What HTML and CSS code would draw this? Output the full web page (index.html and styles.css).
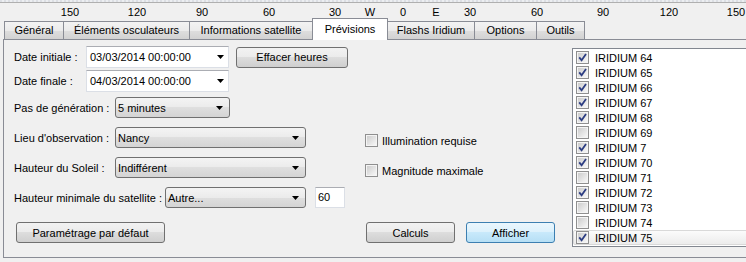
FILE: index.html
```html
<!DOCTYPE html>
<html lang="fr">
<head>
  <meta charset="UTF-8">
  <link rel="stylesheet" href="styles.css">
</head>
<body>
  <div class="map-edge"></div>

  <!-- longitude scale under the map -->
  <div class="scale">
    <span class="tick" style="left:70px">150</span>
    <span class="tick" style="left:137px">120</span>
    <span class="tick" style="left:202px">90</span>
    <span class="tick" style="left:269px">60</span>
    <span class="tick" style="left:335px">30</span>
    <span class="tick" style="left:370px">W</span>
    <span class="tick" style="left:403px">0</span>
    <span class="tick" style="left:436px">E</span>
    <span class="tick" style="left:470px">30</span>
    <span class="tick" style="left:537px">60</span>
    <span class="tick" style="left:603px">90</span>
    <span class="tick" style="left:669px">120</span>
    <span class="tick" style="left:736px">150</span>
  </div>

  <div class="tabs">
    <div class="tab t-general">Général</div>
    <div class="tab t-elements">Éléments osculateurs</div>
    <div class="tab t-infos">Informations satellite</div>
    <div class="tab t-previsions active">Prévisions</div>
    <div class="tab t-flashs">Flashs Iridium</div>
    <div class="tab t-options">Options</div>
    <div class="tab t-outils">Outils</div>
  </div>

  <div class="panel">
    <div class="form">
      <div class="row">
        <span class="label-date">Date initiale :</span>
        <div class="datebox">03/03/2014 00:00:00
          <svg class="arrow" width="7" height="4" viewBox="0 0 7 4"><path d="M0 0h7L3.5 4z"/></svg>
        </div>
        <button class="btn btn-clear">Effacer heures</button>
      </div>
      <div class="row row-second">
        <span class="label-date">Date finale :</span>
        <div class="datebox">04/03/2014 00:00:00
          <svg class="arrow" width="7" height="4" viewBox="0 0 7 4"><path d="M0 0h7L3.5 4z"/></svg>
        </div>
      </div>
      <div class="row combo-row combo-first">
        <span class="label">Pas de génération :</span>
        <div class="combo combo-short">5 minutes
          <svg class="arrow" width="7" height="4" viewBox="0 0 7 4"><path d="M0 0h7L3.5 4z"/></svg>
        </div>
      </div>
      <div class="row combo-row">
        <span class="label">Lieu d'observation :</span>
        <div class="combo">Nancy
          <svg class="arrow" width="7" height="4" viewBox="0 0 7 4"><path d="M0 0h7L3.5 4z"/></svg>
        </div>
      </div>
      <div class="row combo-row">
        <span class="label">Hauteur du Soleil :</span>
        <div class="combo">Indifférent
          <svg class="arrow" width="7" height="4" viewBox="0 0 7 4"><path d="M0 0h7L3.5 4z"/></svg>
        </div>
      </div>
      <div class="row combo-row">
        <span class="label-long">Hauteur minimale du satellite :</span>
        <div class="combo combo-mid">Autre...
          <svg class="arrow" width="7" height="4" viewBox="0 0 7 4"><path d="M0 0h7L3.5 4z"/></svg>
        </div>
        <div class="textbox">60</div>
      </div>
      <div class="actions">
        <button class="btn btn-default">Paramétrage par défaut</button>
      </div>
    </div>

    <div class="options">
      <label class="check"><span class="cb"></span>Illumination requise</label>
      <label class="check"><span class="cb"></span>Magnitude maximale</label>
      <div class="actions">
        <button class="btn btn-small">Calculs</button>
        <button class="btn btn-small btn-focus">Afficher</button>
      </div>
    </div>

    <div class="list">
      <div class="item"><span class="cb checked"><svg width="9" height="9" viewBox="0 0 9 9"><path d="M1.2 4.4L3.6 7.2L8 1"/></svg></span>IRIDIUM 64</div>
      <div class="item"><span class="cb checked"><svg width="9" height="9" viewBox="0 0 9 9"><path d="M1.2 4.4L3.6 7.2L8 1"/></svg></span>IRIDIUM 65</div>
      <div class="item"><span class="cb checked"><svg width="9" height="9" viewBox="0 0 9 9"><path d="M1.2 4.4L3.6 7.2L8 1"/></svg></span>IRIDIUM 66</div>
      <div class="item"><span class="cb checked"><svg width="9" height="9" viewBox="0 0 9 9"><path d="M1.2 4.4L3.6 7.2L8 1"/></svg></span>IRIDIUM 67</div>
      <div class="item"><span class="cb checked"><svg width="9" height="9" viewBox="0 0 9 9"><path d="M1.2 4.4L3.6 7.2L8 1"/></svg></span>IRIDIUM 68</div>
      <div class="item"><span class="cb"></span>IRIDIUM 69</div>
      <div class="item"><span class="cb checked"><svg width="9" height="9" viewBox="0 0 9 9"><path d="M1.2 4.4L3.6 7.2L8 1"/></svg></span>IRIDIUM 7</div>
      <div class="item"><span class="cb checked"><svg width="9" height="9" viewBox="0 0 9 9"><path d="M1.2 4.4L3.6 7.2L8 1"/></svg></span>IRIDIUM 70</div>
      <div class="item"><span class="cb"></span>IRIDIUM 71</div>
      <div class="item"><span class="cb checked"><svg width="9" height="9" viewBox="0 0 9 9"><path d="M1.2 4.4L3.6 7.2L8 1"/></svg></span>IRIDIUM 72</div>
      <div class="item"><span class="cb"></span>IRIDIUM 73</div>
      <div class="item"><span class="cb"></span>IRIDIUM 74</div>
      <div class="item current"><span class="cb checked"><svg width="9" height="9" viewBox="0 0 9 9"><path d="M1.2 4.4L3.6 7.2L8 1"/></svg></span>IRIDIUM 75</div>
    </div>
  </div>
</body>
</html>
```

FILE: styles.css
```css
* {
  box-sizing: border-box;
}
html, body {
  margin: 0;
  overflow: hidden;
}
body {
  width: 746px;
  height: 262px;
  background: #f0f0f0;
  font-family: "Liberation Sans", Arial, sans-serif;
  font-size: 11px;
  color: #000;
}
.map-edge {
  height: 3px;
  background: repeating-linear-gradient(90deg, #dcdfe4 0 2px, #eceef1 2px 4px);
  border-bottom: 1px solid #b0b0b0;
}
.scale {
  position: relative;
  height: 15px;
}
.tick {
  position: absolute;
  top: 3px;
  line-height: 13px;
  transform: translateX(-50%);
}

/* tabs */
.tabs {
  display: flex;
  align-items: flex-end;
  height: 21px;
  padding-left: 4px;
  position: relative;
  z-index: 1;
}
.tab {
  height: 18px;
  margin-left: -1px;
  border: 1px solid #898c95;
  border-bottom: none;
  background: linear-gradient(#f3f3f3, #ebebeb 50%, #dedede 50%, #d2d2d2);
  text-align: center;
  line-height: 17px;
}
.tab:first-child {
  margin-left: 0;
}
.tab.active {
  height: 22px;
  margin-bottom: -1px;
  background: #fff;
  line-height: 20px;
}
.t-general { width: 60px; }
.t-elements { width: 127px; }
.t-infos { width: 124px; }
.t-previsions { width: 76px; }
.t-flashs { width: 88px; }
.t-options { width: 63px; }
.t-outils { width: 49px; }

.panel {
  display: flex;
  width: 780px;
  height: 219px;
  margin-left: 3px;
  border: 1px solid #898c95;
}

/* left form */
.form {
  width: 361px;
  padding: 6px 0 14px 10px;
  display: flex;
  flex-direction: column;
}
.row {
  display: flex;
  align-items: center;
  height: 22px;
}
.row-second {
  margin-top: 2px;
}
.combo-row {
  height: 21px;
  margin-top: 9px;
}
.combo-row.combo-first {
  margin-top: 5px;
}
.label-date { width: 72px; }
.label { width: 101px; }
.label-long { width: 151px; }

.datebox {
  width: 143px;
  height: 22px;
  display: flex;
  align-items: center;
  justify-content: space-between;
  padding: 0 4px 0 3px;
  background: #fff;
  border: 1px solid #dbdfe6;
  border-top-color: #abadb3;
}
.combo {
  width: 191px;
  height: 21px;
  display: flex;
  align-items: center;
  justify-content: space-between;
  padding: 0 6px 0 2px;
  border: 1px solid #707070;
  border-radius: 3px;
  background: linear-gradient(#f4f4f4, #ebebeb 50%, #dfdfdf 50%, #d4d4d4);
}
.combo-short { width: 115px; }
.combo-mid { width: 141px; }
.arrow {
  display: block;
  fill: #000;
}
.textbox {
  width: 30px;
  height: 21px;
  margin-left: 9px;
  padding-left: 2px;
  line-height: 19px;
  background: #fff;
  border: 1px solid #dbdfe6;
  border-top-color: #abadb3;
}

.btn {
  height: 21px;
  padding: 0;
  font: inherit;
  color: #000;
  text-align: center;
  border: 1px solid #707070;
  border-radius: 3px;
  background: linear-gradient(#f2f2f2, #ebebeb 50%, #dddddd 50%, #cfcfcf);
}
.btn-clear {
  width: 112px;
  margin-left: 7px;
}
.form .actions {
  margin-top: auto;
  padding-left: 2px;
}
.btn-default {
  width: 149px;
}

/* middle column */
.options {
  width: 207px;
  padding: 94px 0 14px 0;
  display: flex;
  flex-direction: column;
}
.check {
  display: flex;
  align-items: center;
  gap: 4px;
  height: 13px;
}
.check + .check {
  margin-top: 17px;
}
.options .actions {
  margin-top: auto;
  display: flex;
  gap: 11px;
  padding-left: 1px;
}
.btn-small {
  width: 89px;
}
.btn-focus {
  border-color: #3c7fb1;
  background: linear-gradient(#eaf6fd, #dcf1fc 50%, #c8e9fb 50%, #b6dff5);
}

/* checkbox */
.cb {
  width: 13px;
  height: 13px;
  flex: none;
  display: flex;
  align-items: center;
  justify-content: center;
  padding: 1px;
  border: 1px solid #8f8f8f;
  background: linear-gradient(135deg, #cdcdcd, #f7f7f7) content-box, #f4f4f4;
}
.cb svg {
  fill: none;
  stroke: #2c3d82;
  stroke-width: 1.8;
}

/* satellite list */
.list {
  width: 200px;
  height: 199px;
  margin-top: 8px;
  padding: 1px 0;
  background: #fff;
  border: 1px solid #828790;
}
.item {
  display: flex;
  align-items: center;
  gap: 6px;
  height: 15px;
  padding-left: 3px;
}
.item.current {
  padding-left: 2px;
  border: 1px solid #d9d9d9;
  border-radius: 2px;
  background: linear-gradient(#fbfbfb, #ececec);
}
```
